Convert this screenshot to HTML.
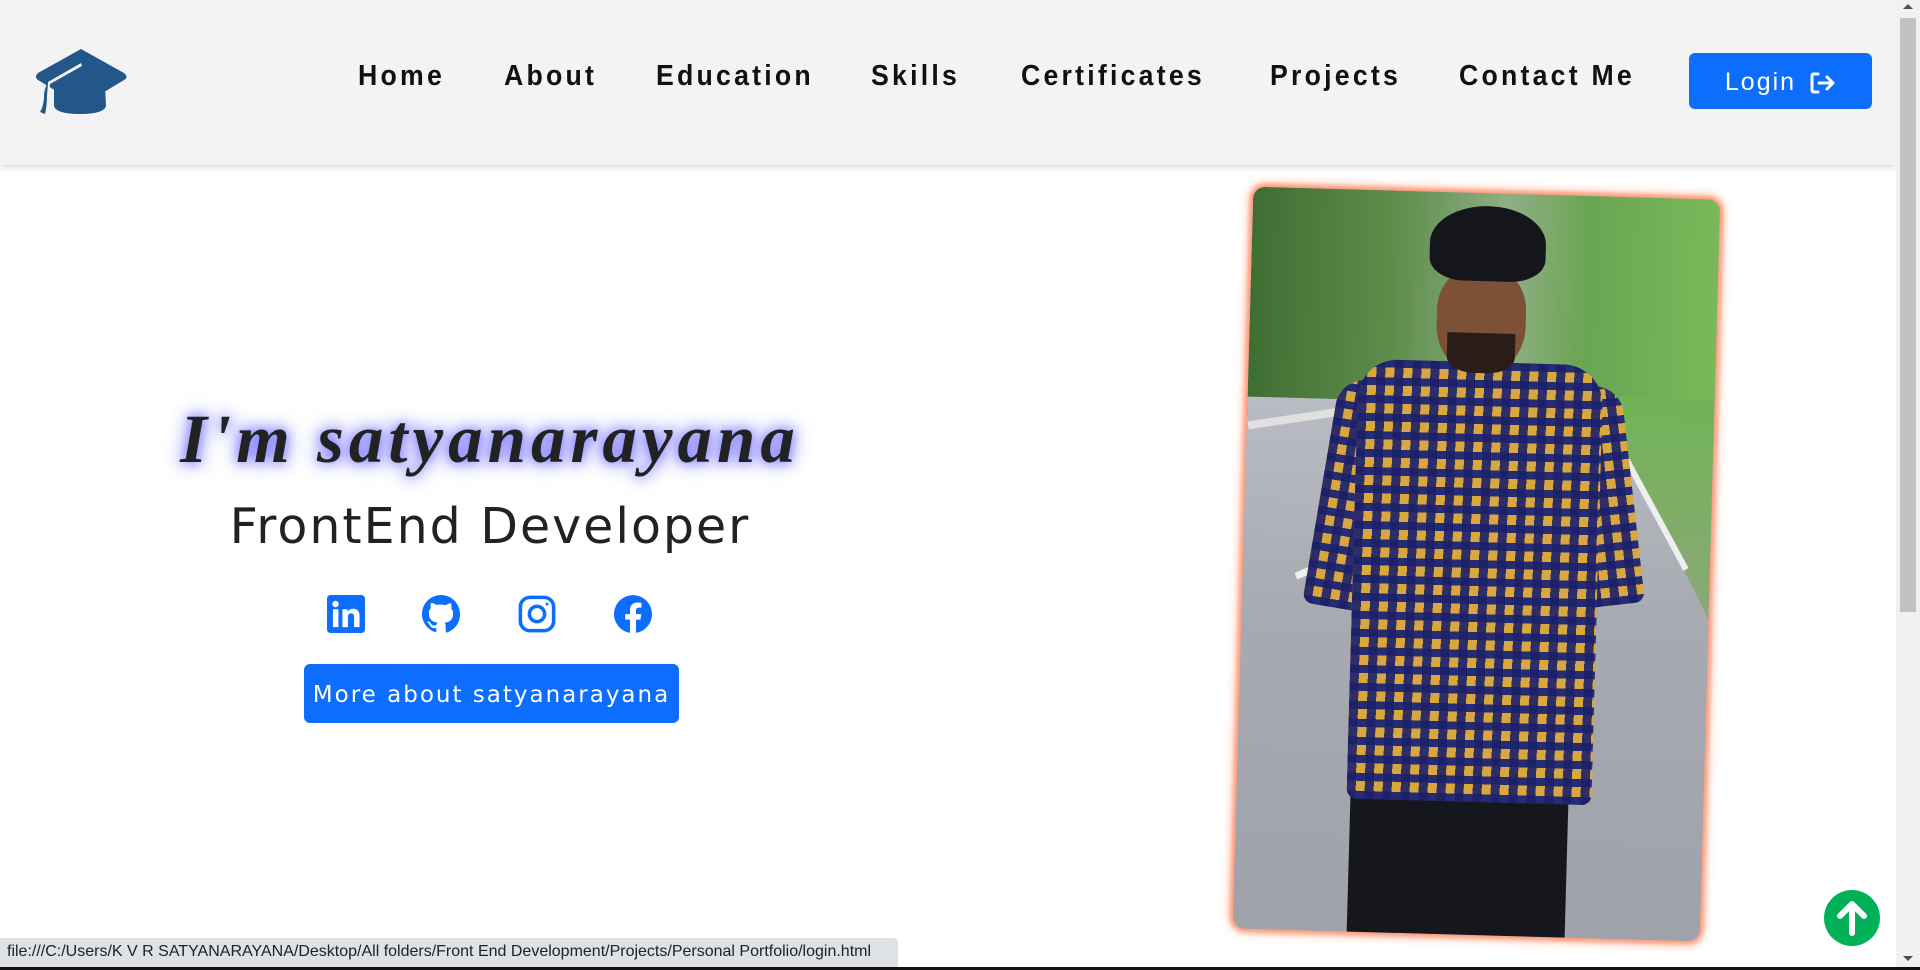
<!DOCTYPE html>
<html><head><meta charset="utf-8"><style>
*{margin:0;padding:0;box-sizing:border-box}
html,body{width:1920px;height:970px;overflow:hidden;background:#fff;font-family:"Liberation Sans",sans-serif}
.nav{position:absolute;left:0;top:0;width:1896px;height:165px;background:#f3f3f3;box-shadow:0 2px 6px rgba(120,140,180,.35)}
.nav a{position:absolute;top:60px;font-weight:bold;font-size:29px;letter-spacing:3.5px;color:#111;font-family:"Liberation Sans",sans-serif;transform:scaleX(.92);transform-origin:left}
.login{position:absolute;left:1689px;top:53px;width:183px;height:56px;background:#0d6efd;border-radius:6px;color:#fff;font-size:25px;letter-spacing:2px;display:flex;align-items:center;justify-content:center;gap:14px;padding-top:3px}
.title{position:absolute;left:0;width:980px;top:400px;text-align:center;font-family:"Liberation Serif",serif;font-style:italic;font-weight:bold;font-size:69px;letter-spacing:5px;color:#222;text-shadow:0 0 12px #6f6cff,0 0 22px #8a88ff}
.sub{position:absolute;left:0;width:980px;top:498px;text-align:center;font-family:"DejaVu Sans",sans-serif;font-size:49px;letter-spacing:2px;color:#222}
.icons svg{position:absolute;top:595px;width:38px;height:38px}
.btn{position:absolute;left:304px;top:664px;width:375px;height:59px;background:#0d6efd;border-radius:6px;color:#fff;font-family:"DejaVu Sans",sans-serif;font-size:23px;letter-spacing:2px;text-align:center;line-height:62px}
.card{position:absolute;left:1243px;top:193px;width:467px;height:742px;transform:rotate(1.6deg);border-radius:12px;overflow:hidden;box-shadow:0 0 4px 3px #ff9a7a,0 0 10px 4px #ffc0a8;background:#a8abb2}
.card div{position:absolute}
.plaid{background:repeating-linear-gradient(90deg,rgba(28,32,105,.9) 0 9px,transparent 9px 18px),repeating-linear-gradient(0deg,#262c74 0 8px,#d9a740 8px 18px)}
.sb{position:absolute;left:1896px;top:0;width:24px;height:967px;background:#f1f1f1}
.status{position:absolute;left:0;top:938px;width:898px;height:29px;background:#dee1e6;border-top-right-radius:5px;font-size:16px;color:#222;padding:5px 0 0 7px;white-space:nowrap}
</style></head><body>
<div class="nav">
<svg style="position:absolute;left:34px;top:48px" width="95" height="67" viewBox="0 0 95 67"><path d="M47 1 L90 25 Q95 29 90 32 L47 58 L4 32 Q0 29 4 25 Z" fill="#235689"/><path d="M20 37 L20 58 Q22 66 46 66 Q70 66 72 58 L71 37 L47 52 Z" fill="#235689"/><path d="M47 15 L14 34 L13 50 Q12 60 9 64 L13 66 Q16 58 15 48 L16 36 L48 18 Z" fill="#f3f3f3"/><path d="M14 35 Q10 40 10 50 Q9 60 6 64 L11 66 Q13 58 13 48 Z" fill="#235689"/></svg>
<a style="left:358px">Home</a><a style="left:504px">About</a><a style="left:656px">Education</a><a style="left:871px">Skills</a><a style="left:1021px">Certificates</a><a style="left:1270px">Projects</a><a style="left:1459px">Contact Me</a>
<div class="login">Login <svg width="26" height="24" viewBox="0 0 26 24" fill="none" stroke="#fff" stroke-width="3" stroke-linecap="round" stroke-linejoin="round"><path d="M8 3H4Q2 3 2 5V19Q2 21 4 21H8"/><path d="M9 12H23M17 6L23 12L17 18"/></svg></div>
</div>
<div class="title">I'm satyanarayana</div>
<div class="sub">FrontEnd Developer</div>
<div class="icons">
<svg style="left:327px" viewBox="0 0 16 16"><rect x="0" y="0" width="16" height="16" rx="1.5" fill="#0d6efd"/><rect x="2.5" y="6" width="2.3" height="7.5" fill="#fff"/><circle cx="3.6" cy="3.8" r="1.35" fill="#fff"/><path d="M6.5 6h2.2v1.1Q9.4 5.8 11 5.8q2.7 0 2.7 3v4.7h-2.3V9.3q0-1.6-1.3-1.6T8.8 9.4v4.1H6.5z" fill="#fff"/></svg>
<svg style="left:422px" viewBox="0 0 16 16"><path fill="#0d6efd" d="M8 0C3.58 0 0 3.58 0 8c0 3.54 2.29 6.53 5.47 7.59.4.07.55-.17.55-.38v-1.33c-2.23.48-2.7-1.07-2.7-1.07-.36-.92-.89-1.17-.89-1.17-.73-.5.06-.49.06-.49.8.06 1.23.83 1.23.83.72 1.22 1.87.87 2.33.66.07-.52.28-.87.5-1.07-1.78-.2-3.64-.89-3.64-3.95 0-.87.31-1.59.82-2.15-.08-.2-.36-1.02.08-2.12 0 0 .67-.21 2.2.82A7.7 7.7 0 0 1 8 4.04c.68 0 1.36.09 2 .27 1.53-1.04 2.2-.82 2.2-.82.44 1.1.16 1.92.08 2.12.51.56.82 1.27.82 2.15 0 3.07-1.87 3.75-3.65 3.95.29.25.54.73.54 1.48v2.2c0 .21.15.46.55.38A8 8 0 0 0 16 8c0-4.42-3.58-8-8-8"/></svg>
<svg style="left:518px" viewBox="0 0 16 16" fill="none" stroke="#0d6efd" stroke-width="1.5"><rect x="1" y="1" width="14" height="14" rx="4"/><circle cx="8" cy="8" r="3.2"/><circle cx="12.2" cy="3.8" r=".6" fill="#0d6efd" stroke="none"/></svg>
<svg style="left:614px" viewBox="0 0 16 16"><path fill="#0d6efd" d="M16 8.05A8 8 0 1 0 6.75 15.95V10.36H4.72V8.05h2.03V6.29c0-2 1.2-3.12 3.02-3.12.87 0 1.79.16 1.79.16v1.97h-1.01c-1 0-1.31.62-1.31 1.25v1.5h2.22l-.36 2.31H9.24v5.59A8 8 0 0 0 16 8.05"/></svg>
</div>
<div class="btn">More about satyanarayana</div>
<div class="card">
<div style="left:0;top:0;width:467px;height:230px;background:linear-gradient(90deg,#3f6e34,#5d8d4a 30%,#8fae86 55%,#6aa552 72%,#79b95a)"></div>
<div style="left:0;top:210px;width:467px;height:540px;background:linear-gradient(180deg,#b9bcc3,#a7aab1 40%,#9fa2a9)"></div>
<div style="left:330px;top:200px;width:137px;height:220px;background:linear-gradient(180deg,#72b356,#8aa878);clip-path:polygon(0 0,100% 0,100% 100%,40% 30%,0 10%)"></div>
<div style="left:405px;top:240px;width:6px;height:140px;background:#eee;transform:rotate(-30deg)"></div>
<div style="left:50px;top:370px;width:70px;height:7px;background:#eee;transform:rotate(-25deg)"></div>
<div style="left:0;top:220px;width:170px;height:8px;background:#e0e0e0;transform:rotate(-10deg)"></div>
<div style="left:114px;top:560px;width:218px;height:190px;background:#15171c"></div>
<div style="left:110px;top:430px;width:40px;height:150px;background:#7a4a34;border-radius:20px"></div>
<div style="left:305px;top:420px;width:40px;height:150px;background:#7a4a34;border-radius:20px"></div>
<div class="plaid" style="left:76px;top:190px;width:70px;height:230px;border-radius:30px 10px 10px 10px;transform:rotate(8deg)"></div>
<div class="plaid" style="left:318px;top:190px;width:70px;height:220px;border-radius:10px 30px 10px 10px;transform:rotate(-8deg)"></div>
<div class="plaid" style="left:110px;top:169px;width:245px;height:440px;border-radius:40px 40px 10px 10px"></div>
<div style="left:187px;top:75px;width:89px;height:105px;background:#7d5038;border-radius:40% 40% 45% 45%"></div>
<div style="left:198px;top:140px;width:68px;height:40px;background:#2a1c18;border-radius:0 0 40% 40%"></div>
<div style="left:178px;top:13px;width:116px;height:75px;background:#15151c;border-radius:50% 50% 30% 30%"></div>
</div>
<svg style="position:absolute;left:1824px;top:890px" width="56" height="56" viewBox="0 0 56 56"><circle cx="28" cy="28" r="28" fill="#00b158"/><path d="M28 43V14M16 26L28 14L40 26" stroke="#fff" stroke-width="6" fill="none" stroke-linecap="round" stroke-linejoin="round"/></svg>
<div class="sb"><div style="position:absolute;left:4px;top:18px;width:16px;height:594px;background:#c1c1c1"></div>
<div style="position:absolute;left:7px;top:4px;border:5px solid transparent;border-bottom-color:#505050;border-top:0"></div>
<div style="position:absolute;left:7px;top:956px;border:5px solid transparent;border-top-color:#505050;border-bottom:0"></div></div>
<div class="status">file:///C:/Users/K V R SATYANARAYANA/Desktop/All folders/Front End Development/Projects/Personal Portfolio/login.html</div>
<div style="position:absolute;left:0;top:967px;width:1920px;height:3px;background:#111"></div>
</body></html>
